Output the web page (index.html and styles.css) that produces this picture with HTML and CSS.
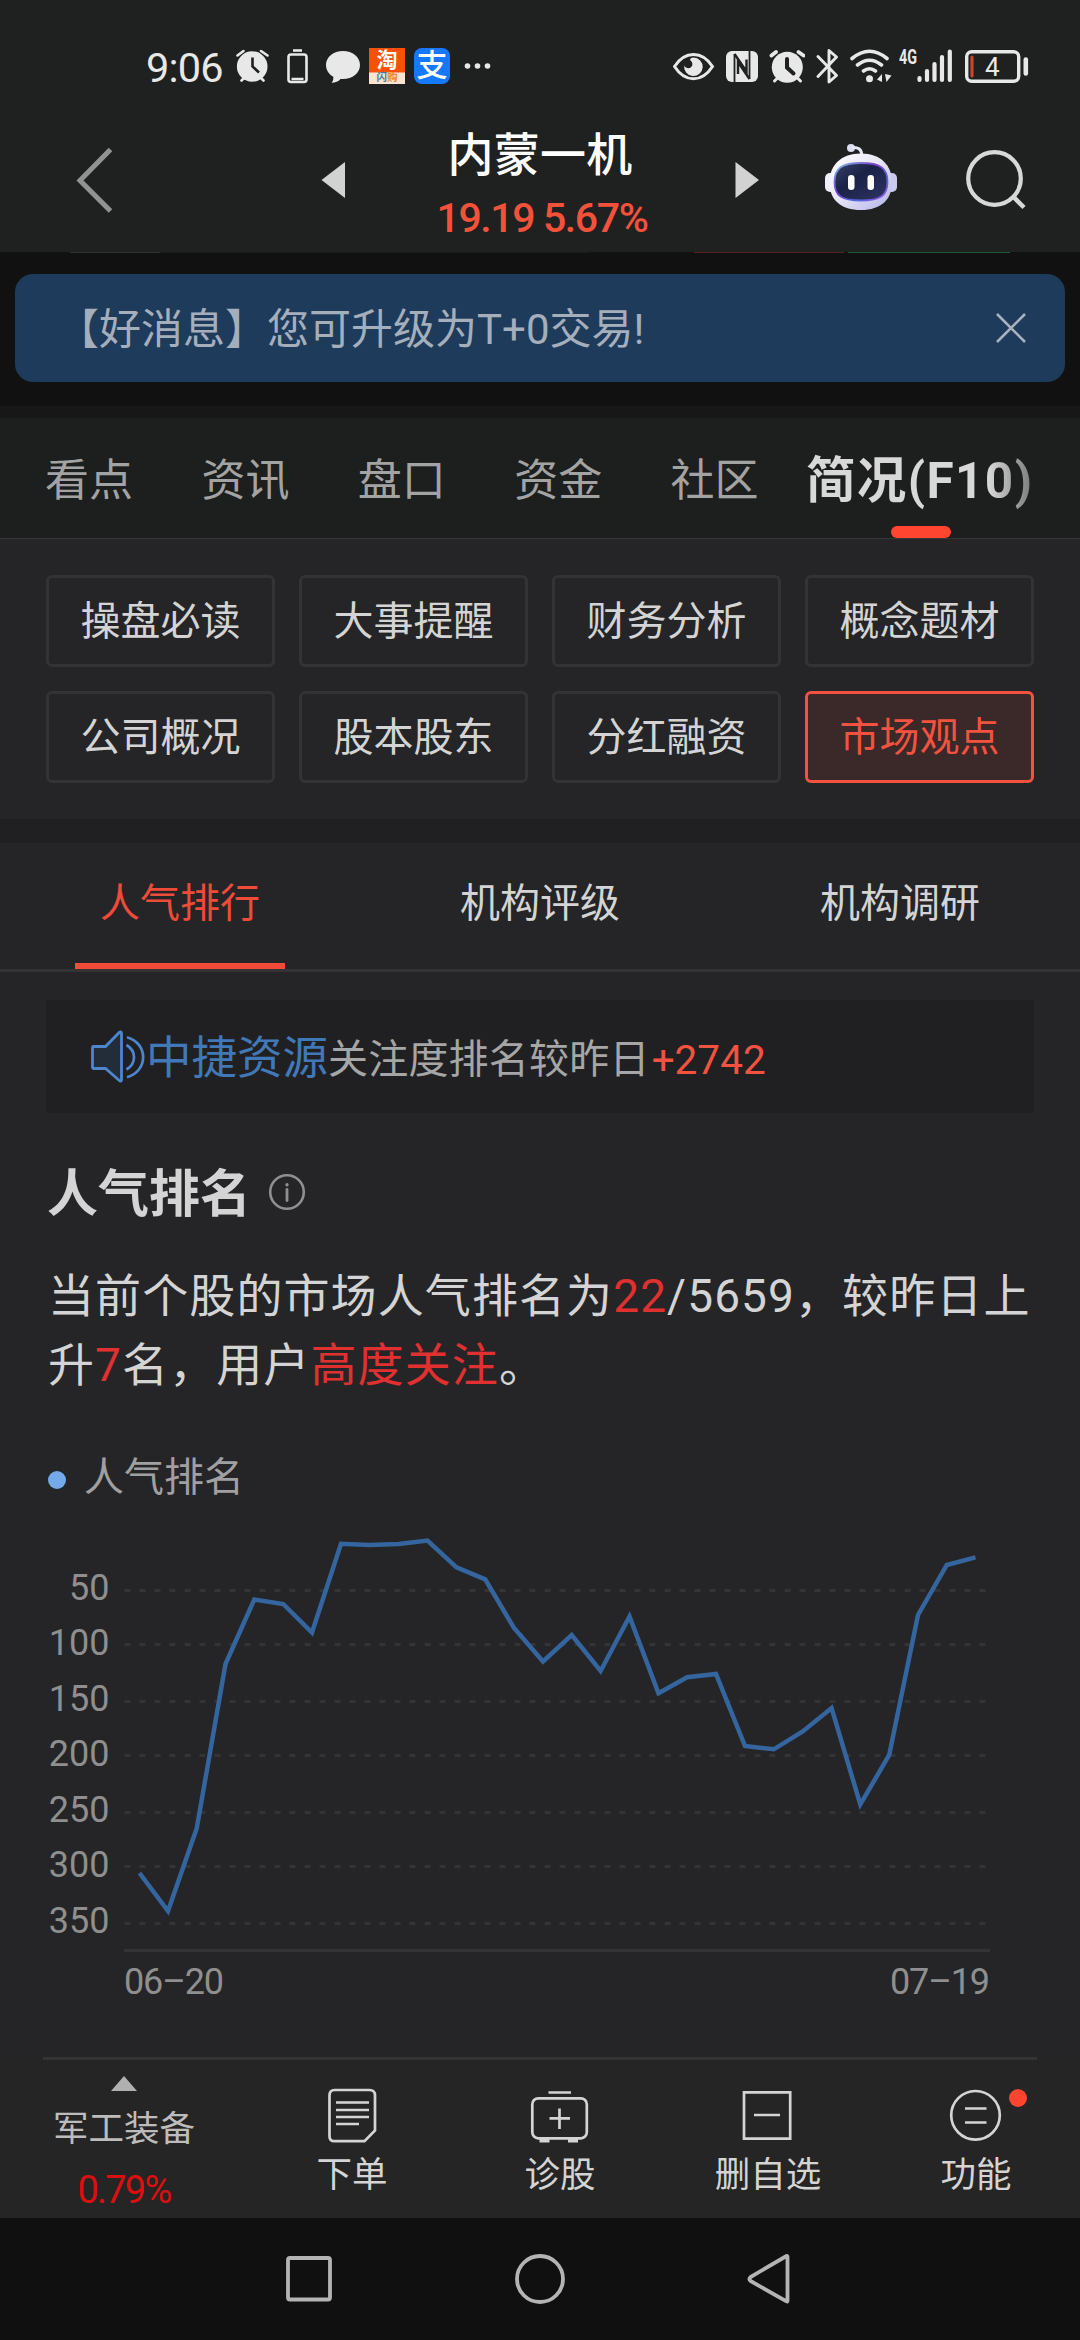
FILE: index.html
```html
<!DOCTYPE html>
<html lang="zh-CN">
<head>
<meta charset="utf-8">
<title>内蒙一机</title>
<link rel="stylesheet" href="styles.css">
</head>
<body>
<header class="header">
  <div class="status">
    <span class="clock">9:06</span>
    <svg class="si alarm-l" width="34" height="40" viewBox="235 46 34 40"><circle cx="252.200" cy="66.500" r="15.300" fill="#e8e8e8"/><path d="M237.500 55.500L243.500 51M261 51l6.500 4.500M241.500 80.500l3.500-3.500M263.500 80.500l-3.500-3.500" stroke="#e8e8e8" stroke-width="2.600" fill="none" stroke-linecap="round"/><path d="M252.500 57.500V66.500l6.500 6" stroke="#1f2120" stroke-width="2.600" fill="none"/></svg>
    <svg class="si cell" width="24" height="40" viewBox="286 46 24 40"><path d="M293 50.500h9" stroke="#e8e8e8" stroke-width="2.600"/><rect x="288.500" y="54.500" width="18" height="27.500" rx="2.500" fill="none" stroke="#e8e8e8" stroke-width="2.600"/><path d="M291.500 79h12" stroke="#e8e8e8" stroke-width="2.500"/></svg>
    <svg class="si bubble" width="36" height="40" viewBox="325 46 36 40"><path d="M343 51c9.500 0 17 6 17 14s-7.500 14-17 14h-2.500c-2 2.500-5 3.800-9 3.800 1.500-1.500 2-3.300 1.800-6C329 74.500 326 70 326 65c0-8 7.500-14 17-14z" fill="#e8e8e8"/></svg>
    <span class="app tao"><b>淘</b><i><em>闪</em>购</i></span>
    <span class="app pay">支</span>
    <svg class="si dots" width="28" height="40" viewBox="464 46 28 40" fill="#e8e8e8"><circle cx="467.500" cy="66" r="2.800"/><circle cx="477.500" cy="66" r="2.800"/><circle cx="487.500" cy="66" r="2.800"/></svg>
    <svg class="si eye" width="42" height="40" viewBox="673 46 42 40"><path d="M674.500 66.500C680 58 687 54.500 693.500 54.500S707 58 712.500 66.500C707 75 700 78.800 693.500 78.800S680 75 674.500 66.500z" fill="none" stroke="#e8e8e8" stroke-width="3"/><path d="M693.500 57.500a9.300 9.300 0 1 1-9.300 8c1.500 3 5 3.500 7 1.500s1.500-5-1-6.800c-.5-1.700 1.500-2.700 3.300-2.700z" fill="#e8e8e8"/></svg>
    <svg class="si nfc" width="34" height="40" viewBox="725 46 34 40"><rect x="726" y="51" width="32" height="31" rx="6" fill="#e8e8e8"/><path d="M734.500 82V54M749.500 51V79" stroke="#1f2120" stroke-width="1.800" fill="none"/><path d="M734.500 54L746.500 71.500V59.500M749.500 79L738 62V74" stroke="#1f2120" stroke-width="2.400" fill="none"/></svg>
    <svg class="si alarm-r" width="36" height="40" viewBox="769 46 36 40"><circle cx="787.300" cy="67.200" r="15.500" fill="#e8e8e8"/><path d="M771.500 55.500L776 52M798.500 52l5 3.500" stroke="#e8e8e8" stroke-width="3.800" stroke-linecap="round"/><path d="M774.500 81l3-3M800.500 81l-3-3" stroke="#e8e8e8" stroke-width="3" stroke-linecap="round"/><path d="M787 59V67.500l6.500 6" stroke="#1f2120" stroke-width="4" fill="none" stroke-linecap="round"/></svg>
    <svg class="si bt" width="24" height="40" viewBox="816 46 24 40"><path d="M818 56.500L836.500 75.500 829 82V50.500l7.500 6.500L818 76.500" fill="none" stroke="#e8e8e8" stroke-width="2.900" stroke-linejoin="round" stroke-linecap="round"/></svg>
    <svg class="si wifi" width="42" height="40" viewBox="850 46 42 40"><path d="M852 58.500q17.500-14.500 35 0M857.500 65q12-9.500 24 0M863.500 71q6-4.500 12 0" fill="none" stroke="#e8e8e8" stroke-width="3.600" stroke-linecap="round"/><circle cx="869.500" cy="78.800" r="3.500" fill="#e8e8e8"/><path d="M877 79.500l5-5.500v8zM885 74l6.500 1.500-5 6.500z" fill="#e8e8e8"/></svg>
    <svg class="si signal" width="54" height="40" viewBox="899 46 54 40"><text x="899" y="64" class="net" textLength="18" lengthAdjust="spacingAndGlyphs">4G</text><path d="M919.500 78v2M927 71v9M934.500 64v16M942 57v23M949.800 51.500V80" stroke="#e8e8e8" stroke-width="4.200" stroke-linecap="round"/></svg>
    <svg class="si batt" width="64" height="40" viewBox="965 46 64 40"><rect x="966.700" y="51.700" width="52" height="29.500" rx="5" fill="none" stroke="#e8e8e8" stroke-width="3.400"/><path d="M972 57v19" stroke="#c8452f" stroke-width="3.200" stroke-linecap="round"/><text x="985" y="75.500" class="level">4</text><path d="M1025.800 59.500v14" stroke="#e8e8e8" stroke-width="4.600" stroke-linecap="round"/></svg>
  </div>
  <div class="titlebar">
    <svg class="back" width="48" height="142" viewBox="70 110 48 142"><path d="M110.500 149.500L80 180.500l30.500 30.500" fill="none" stroke="#929292" stroke-width="5"/></svg>
    <svg class="prev" width="34" height="142" viewBox="316 110 34 142"><path d="M345 162v36l-23.500-18z" fill="#d2d2d2"/></svg>
    <div class="stock"><h1>内蒙一机</h1><p>19.19 5.67%</p></div>
    <svg class="next" width="34" height="142" viewBox="730 110 34 142"><path d="M735.500 162v36l23.500-18z" fill="#d2d2d2"/></svg>
    <svg class="robot" width="78" height="142" viewBox="822 110 78 142">
      <defs><linearGradient id="head" x1="0" y1="0" x2="1" y2="1"><stop offset="0" stop-color="#fff"/><stop offset=".45" stop-color="#e9e7f8"/><stop offset="1" stop-color="#b2b2ea"/></linearGradient>
      <linearGradient id="rim" x1="0" y1="0" x2="1" y2="1"><stop offset="0" stop-color="#7ec8e8"/><stop offset=".4" stop-color="#7a3cc8"/><stop offset=".7" stop-color="#5068d8"/><stop offset="1" stop-color="#a050e0"/></linearGradient>
      <linearGradient id="visor" x1="0" y1="0" x2="1" y2="1"><stop offset="0" stop-color="#3a4268"/><stop offset=".4" stop-color="#1b2248"/><stop offset="1" stop-color="#2d3562"/></linearGradient></defs>
      <circle cx="851" cy="148" r="4" fill="#dcdcf2"/><path d="M852 147.500c6-.5 9.500 1.500 9.800 7.500" fill="none" stroke="#e6e6f5" stroke-width="3"/>
      <rect x="825" y="173" width="12" height="19" rx="5" fill="#efeefa"/><rect x="885" y="173" width="12" height="19" rx="5" fill="#cac9ee"/>
      <path d="M861 153.500c20 0 31 12 31 29s-11 27.500-31 27.500-31.500-10-31.500-27.500 11.500-29 31.500-29z" fill="url(#head)"/>
      <path d="M861 163c19 0 26.500 5 26.500 19S880 200.500 861 200.500 834.500 196 834.500 182 842 163 861 163z" fill="url(#visor)" stroke="url(#rim)" stroke-width="1.800"/>
      <rect x="848" y="175" width="6.500" height="15" rx="3.200" fill="#fff"/><rect x="867.500" y="175" width="6.500" height="15" rx="3.200" fill="#fff"/>
    </svg>
    <svg class="search" width="70" height="142" viewBox="960 110 70 142"><circle cx="994.500" cy="178.500" r="26.300" fill="none" stroke="#d8d8d8" stroke-width="4.200"/><path d="M1013.500 197l10.500 10.500" stroke="#d8d8d8" stroke-width="4.500"/></svg>
  </div>
</header>

<section class="promo">
  <div class="peek"><span class="grey"></span><span class="dim"></span><span class="red"></span><span class="green"></span></div>
  <div class="banner">
    <span>【好消息】您可升级为T+0交易!</span>
    <svg width="32" height="32" viewBox="0 0 32 32"><path d="M2 2l28 28M30 2L2 30" stroke="#a9b2bd" stroke-width="2.600"/></svg>
  </div>
</section>

<nav class="tabs">
  <a>看点</a><a>资讯</a><a>盘口</a><a>资金</a><a>社区</a><a class="current"><span>简况(F10)</span></a>
</nav>

<section class="chips">
  <a>操盘必读</a><a>大事提醒</a><a>财务分析</a><a>概念题材</a>
  <a>公司概况</a><a>股本股东</a><a>分红融资</a><a class="on">市场观点</a>
</section>

<nav class="subtabs"><a class="on">人气排行</a><a>机构评级</a><a>机构调研</a></nav>

<main class="content">
  <div class="notice">
    <svg width="54" height="56" viewBox="91 1029 54 56"><path d="M93.500 1046.500h12l14-14.300q2-1 2 1v46.500q0 2-2 1l-14-12.200h-12q-1 0-1-1v-20q0-1 1-1z" fill="#232d3a" stroke="#4c86cf" stroke-width="2.800"/><path d="M126.500 1045c10 6 10 18.500 0 24.500M127 1037.200c21.500 6 21.500 34 0 40" fill="none" stroke="#4c86cf" stroke-width="2.700"/></svg>
    <span class="name">中捷资源</span><span class="what">关注度排名较昨日</span><span class="delta">+2742</span>
  </div>
  <h2 class="heading">人气排名
    <svg width="38" height="38" viewBox="0 0 38 38"><circle cx="19" cy="19" r="16.800" fill="none" stroke="#8f8f8f" stroke-width="2.600"/><path d="M19 16.500v11" stroke="#8f8f8f" stroke-width="2.800" stroke-linecap="round"/><circle cx="19" cy="11.800" r="1.700" fill="#8f8f8f"/></svg>
  </h2>
  <p class="summary">当前个股的市场人气排名为<b>22</b><i>/5659</i>，较昨日上<br>升<b>7</b>名，用户<b class="hl">高度关注</b>。</p>
  <div class="legend">人气排名</div>
  <svg class="chart" width="1080" height="500" viewBox="0 1520 1080 500">
    <g class="grid"><path d="M124.500 1590.500H986M124.500 1644.500H986M124.500 1701.500H986M124.500 1755.500H986M124.500 1812.500H986M124.500 1866.500H986M124.500 1923.500H986"/></g>
    <path class="axis" d="M124 1950.500H990"/>
    <g class="ylab"><text x="109.500" y="1600">50</text><text x="109.500" y="1655">100</text><text x="109.500" y="1711">150</text><text x="109.500" y="1766">200</text><text x="109.500" y="1822">250</text><text x="109.500" y="1877">300</text><text x="109.500" y="1933">350</text></g>
    <text class="xlab" x="124" y="1994" textLength="100">06–20</text><text class="xlab" x="890" y="1994" textLength="100">07–19</text>
    <polyline class="line" points="139.500,1873 168,1911 196.700,1828.500 225.500,1664 254.300,1599.500 283.200,1604 312,1632.500 341,1543.700 370,1545 398.800,1544 427.500,1540.600 456.500,1567.300 485.200,1579.300 514,1628 543,1661.500 571.700,1635 600.600,1671 629.500,1616.500 658.500,1693.300 687.200,1677.300 716,1674 745,1746 773.800,1749.300 802.700,1731.500 831.600,1708 860.300,1804.500 889.200,1755 918,1615 946.800,1565 975.500,1557.300"/>
  </svg>
</main>

<footer class="actions">
  <div class="sector"><svg width="26" height="15" viewBox="0 0 26 15"><path d="M13 0l13 15H0z" fill="#b0b0b0"/></svg><span>军工装备</span><em>0.79%</em></div>
  <div class="act"><svg width="60" height="60" viewBox="322 2084 60 60"><path d="M334.500 2090h35q5.500 0 5.500 5.500V2130.500L364.500 2141.200h-30q-5 0-5-5v-40.500q0-5.700 5-5.700z"/><path d="M336 2102.500h33M336 2110h33M336 2117h33M336 2124h23"/></svg><span>下单</span></div>
  <div class="act"><svg width="60" height="60" viewBox="530 2084 60 60"><path d="M548.500 2092.500h22.500M559.500 2108.500v20.500M549.500 2118.300h20.500"/><rect x="532.300" y="2098.300" width="54.500" height="40" rx="6"/><path d="M539.500 2140.500h10M568 2140.500h10" stroke-width="4"/></svg><span>诊股</span></div>
  <div class="act"><svg width="60" height="60" viewBox="738 2084 60 60"><path d="M744 2092.300h46.200v46.400H744zM754 2115h26"/></svg><span>删自选</span></div>
  <div class="act"><svg width="60" height="60" viewBox="946 2084 60 60"><circle cx="975.500" cy="2115.300" r="24.300"/><path d="M965 2108.500h21.500M965 2122.500h21.500"/></svg><span>功能</span><b class="badge"></b></div>
</footer>

<nav class="sysnav">
  <svg width="60" height="60" viewBox="279 2249 60 60"><rect x="288" y="2258" width="42" height="41.500" rx="2"/></svg>
  <svg width="60" height="60" viewBox="510 2249 60 60"><circle cx="540" cy="2279" r="23"/></svg>
  <svg width="60" height="60" viewBox="739 2249 60 60"><path d="M787.500 2257v44q0 1-1 .3l-36-20.300q-2-2 0-4l36-21q1-.5 1 1z"/></svg>
</nav>
</body>
</html>
```
FILE: styles.css
```css
* { box-sizing: border-box; margin: 0; padding: 0; }
body {
  width: 1080px;
  height: 2340px;
  overflow: hidden;
  display: flex;
  flex-direction: column;
  background: #252527;
  color: #d4d4d4;
  font-family: Roboto, "Noto Sans CJK SC", sans-serif;
  font-size: 40px;
}
svg { display: block; flex: none; }
i, em { font-style: normal; }

.header { height: 252px; background: #1f2120; }
.status { height: 110px; display: flex; align-items: flex-start; padding: 46px 0 0 146px; }
.clock { width: 89px; font-size: 41.5px; line-height: 44px; color: #e8e8e8; letter-spacing: -.8px; }
.cell { margin-left: 17px; }
.bubble { margin-left: 15px; }
.app { width: 36px; height: 36px; margin: 2px 0 0 8px; flex: none; color: #fff; text-align: center; }
.tao { background: linear-gradient(#fb5004 0 66%, #fbe3d2 70%); }
.tao b { display: block; font-size: 21px; line-height: 24px; height: 24px; font-weight: 700; }
.tao i { display: block; font-size: 10.5px; line-height: 12px; font-weight: 700; color: #f08030; }
.tao em { color: #4678a8; }
.pay { margin-left: 9px; border-radius: 8px; background: #1677ff; font-size: 31px; line-height: 36px; font-weight: 500; }
.dots { margin-left: 14px; }
.eye { margin-left: 181px; }
.nfc { margin-left: 10px; }
.alarm-r { margin-left: 10px; }
.bt { margin-left: 11px; }
.wifi { margin-left: 10px; }
.signal { margin-left: 7px; }
.batt { margin-left: 12px; }
.net { font-size: 20px; font-weight: 700; fill: #e8e8e8; }
.level { font-size: 26px; fill: #e8e8e8; }

.titlebar { height: 142px; display: flex; }
.back { margin-left: 70px; }
.prev { margin-left: 198px; }
.stock { width: 380px; text-align: center; }
.stock h1 { margin-top: 19px; height: 52px; line-height: 52px; font-size: 46px; font-weight: 500; color: #fff; letter-spacing: .3px; }
.stock p { margin-top: 11px; line-height: 52px; font-size: 41px; font-weight: 500; color: #f4513b; letter-spacing: -1.4px; transform: translateX(2px); }
.robot { margin-left: 58px; }
.search { margin-left: 60px; }

.promo { height: 166px; background: linear-gradient(#111 0 154px, #171717 154px); }
.peek { height: 22px; display: flex; padding-left: 70px; }
.peek span { height: 1px; }
.grey { width: 90px; background: #303232; }
.dim { width: 430px; background: #1a1a1a; }
.red { width: 150px; margin-left: 104px; background: #542420; }
.green { width: 162px; margin-left: 4px; background: #1e5a3a; }
.banner { height: 108px; margin: 0 15px; padding: 0 38px 0 42px; display: flex; align-items: center; justify-content: space-between; border-radius: 18px; background: #1f3b5b; color: #a5afbb; font-size: 42px; }
.banner span { line-height: 60px; padding-top: 4px; }

.tabs { height: 121px; display: grid; grid-template-columns: repeat(5, 156.4px) 1fr; padding-left: 45px; background: #1d1e1e; border-bottom: 1px solid #373737; }
.tabs a { font-size: 44px; line-height: 127px; height: 120px; color: #a3a3a3; }
.tabs .current { margin-left: -21px; position: relative; font-size: 49.5px; font-weight: 700; letter-spacing: 1.4px; }
.current span { background: linear-gradient(90deg, #d8d8d8 182px, #6f6f6f 232px); -webkit-background-clip: text; background-clip: text; color: transparent; }
.current::after { content: ""; position: absolute; left: 85px; bottom: 0; width: 60px; height: 12px; border-radius: 6px; background: #ff4430; }

.chips { height: 280px; display: grid; grid-template-columns: repeat(4, 229px); grid-auto-rows: 92px; gap: 24px; padding: 36px 46px 0; }
.chips a { border: 3px solid #333; border-radius: 6px; line-height: 88px; text-align: center; color: #d4d4d4; }
.chips .on { border-color: #f2523f; background: #3b2829; color: #f2523f; }

.subtabs { height: 153px; display: grid; grid-template-columns: repeat(3, 1fr); justify-items: center; border-top: 24px solid #202022; border-bottom: 3px solid #333; }
.subtabs a { width: 210px; height: 126px; line-height: 121px; text-align: center; }
.subtabs .on { color: #f04a38; border-bottom: 6px solid #f04a38; }

.content { height: 1085px; display: flex; flex-direction: column; }
.notice { height: 113px; margin: 28px 46px 0; padding-left: 45px; display: flex; align-items: center; background: #202022; line-height: 60px; }
.name { margin: 5px 0 0 1px; font-size: 45.5px; color: #4078b8; }
.what { margin-top: 7px; color: #a6a6a6; letter-spacing: .2px; }
.delta { margin: 7px 0 0 2px; color: #f2523f; font-size: 40.5px; }
.heading { height: 76px; margin: 44px 0 0 47px; display: flex; align-items: center; gap: 17px; font-size: 51px; line-height: 76px; font-weight: 700; }
.heading svg { margin-bottom: 7px; }
.summary { margin: 29px 0 0 48px; height: 138px; font-size: 46px; line-height: 69px; letter-spacing: 1.1px; white-space: nowrap; }
.summary b { font-weight: 400; color: #e03030; }
.legend { height: 60px; margin: 48px 0 0 48px; display: flex; align-items: center; gap: 18px; line-height: 60px; color: #a0a0a0; }
.legend::before { content: ""; width: 18px; height: 18px; border-radius: 50%; background: #74aaea; margin-top: 3px; }
.chart { margin-top: 12px; }
.grid path { fill: none; stroke: #343434; stroke-width: 3; stroke-dasharray: 6 9; }
.axis { stroke: #343434; stroke-width: 3; }
.ylab text { font-size: 36px; fill: #8f8f8f; text-anchor: end; }
.xlab { font-size: 36px; fill: #8f8f8f; }
.line { fill: none; stroke: #35659f; stroke-width: 4.5; stroke-linejoin: miter; }

.actions { height: 161px; display: grid; grid-template-columns: 248px repeat(4, 208px); padding-top: 3px; background: linear-gradient(#343434, #343434) 43px 0 / 994px 3px no-repeat, #252525; font-size: 35.5px; }
.sector, .act { display: flex; flex-direction: column; align-items: center; position: relative; }
.sector svg { margin-top: 16px; }
.sector span { margin-top: 14px; line-height: 49px; color: #bcbcbc; }
.sector em { margin-top: 14px; line-height: 44px; color: #da1010; font-size: 38px; font-weight: 400; letter-spacing: -1.8px; }
.act svg { margin-top: 24px; fill: none; stroke: #d4d4d4; stroke-width: 2.7; }
.act span { margin-top: 7px; line-height: 48px; }
.badge { position: absolute; left: 137px; top: 29px; width: 18px; height: 18px; border-radius: 50%; background: #ff4430; }

.sysnav { height: 122px; display: flex; padding: 31px 0 0 279px; gap: 171px; background: #101010; }
.sysnav svg { fill: none; stroke: #b4b4b4; stroke-width: 3.8; }
.sysnav svg:last-child { margin-left: -2px; }
```
